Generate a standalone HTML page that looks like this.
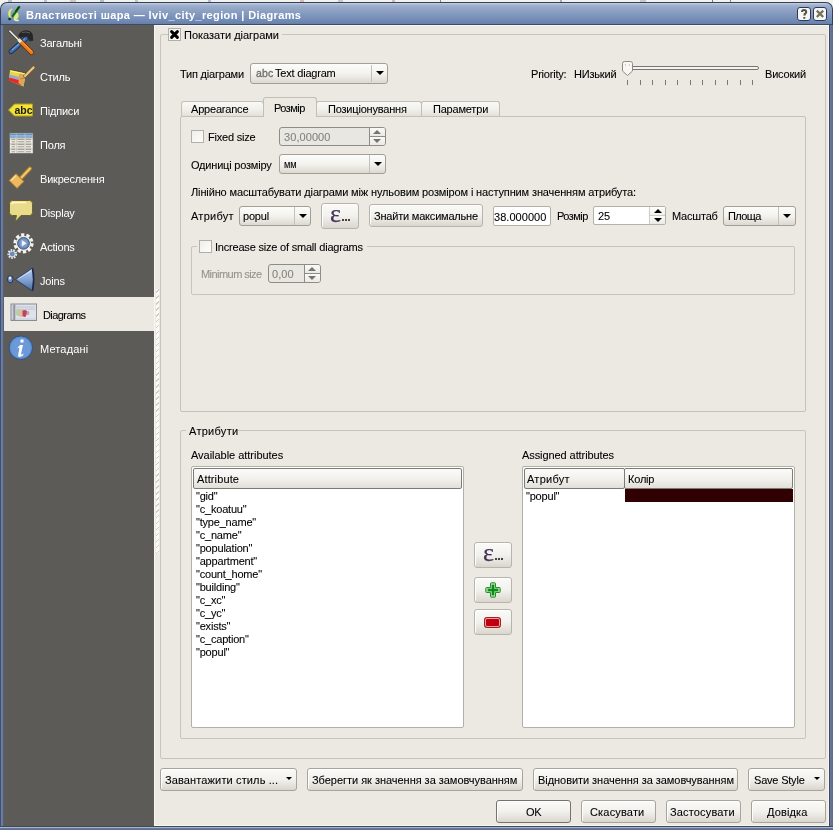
<!DOCTYPE html>
<html><head><meta charset="utf-8">
<style>
*{box-sizing:border-box}
html,body{margin:0;padding:0;width:833px;height:830px;overflow:hidden;background:#f1f1ee;font-family:"Liberation Sans",sans-serif;font-size:11px;color:#000}
#root{position:absolute;left:0;top:0;width:833px;height:830px;will-change:transform;overflow:hidden}
.a{position:absolute}
.t{position:absolute;white-space:nowrap;line-height:13px;letter-spacing:-0.2px;-webkit-text-stroke:0.08px currentColor}
#title{left:0;top:2px;width:833px;height:23px;border:1px solid #34405a;border-bottom:none;border-radius:7px 7px 0 0;background:linear-gradient(#c9d4e6 0,#b0bfd8 1px,#9cadca 3px,#8399be 11px,#6f89b3 18px,#6580ab 21px,#3d4a60 21px)}
#frameL{left:0;top:25px;width:4px;height:805px;background:linear-gradient(90deg,#3e5078 0,#3e5078 1px,#6a7fa0 1px,#6a7a98 2px,#6a7a98 3px,#5a6070 3px)}
#frameR{left:829px;top:25px;width:4px;height:805px;background:linear-gradient(90deg,#3e4a62 0,#3e4a62 1px,#6a7a98 1px,#5a6a88 4px)}
#frameB{left:0;top:826px;width:833px;height:4px;background:linear-gradient(#3f4a5e 0,#3f4a5e 1px,#a9b4cc 1px,#a9b4cc 2px,#6a7a98 2px,#5a6a88 4px)}
#side{left:4px;top:25px;width:150px;height:801px;background:#5c5b57}
#content{left:154px;top:25px;width:675px;height:801px;background:#ece9e3;border-left:1px solid #f7f6f2;border-top:1px solid #f7f6f2;border-right:1px solid #f7f6f2;border-bottom:1px solid #f7f6f2}
.bg{background:#ece9e3}
.gb{position:absolute;border:1px solid #c8c5bc;border-radius:2px}
.btn{position:absolute;border:1px solid #a7a49c;border-radius:3px;background:linear-gradient(#fafaf8,#f2f1ed 50%,#e4e1da 80%,#d9d6ce);box-shadow:inset 1px 1px 0 #fff}
.field{position:absolute;border:1px solid #a9a69e;border-radius:2px;background:#fff}
.cb{position:absolute;width:13px;height:13px;border:1px solid #b1afa7;background:linear-gradient(135deg,#efeee9,#fdfdfc)}
.combo{position:absolute;border:1px solid #a29f97;border-radius:3px;background:linear-gradient(#fcfcfa,#f3f2ee 50%,#e6e3dc 80%,#dcd9d1)}
.sep{position:absolute;top:0;bottom:0;width:1px;background:#c4c1b8}
.arr{position:absolute;width:0;height:0;border-left:4px solid transparent;border-right:4px solid transparent;border-top:4px solid #000}
.arru{position:absolute;width:0;height:0;border-left:4px solid transparent;border-right:4px solid transparent;border-bottom:4px solid #000}
.si{color:#fff;-webkit-text-stroke:0}
.tab{position:absolute;border:1px solid #c2bfb6;border-bottom:none;border-radius:3px 3px 0 0;background:linear-gradient(#f9f9f7,#efeee9 60%,#e3e0d8)}
.spin{position:absolute;border:1px solid #8f8c85;border-radius:3px;background:#fff;overflow:hidden}
.sbtn{position:absolute;right:0;width:16px;background:linear-gradient(#fafaf8,#ebe9e3);border-left:1px solid #8f8c85}
.hdr{position:absolute;border:1px solid #7d7b76;border-radius:2px;background:linear-gradient(#fbfbfa,#f1f0ec 55%,#e2dfd8)}
</style></head><body><div id="root">
<!-- window frame -->
<div class="a" style="left:8px;top:0;width:4px;height:2px;background:#b8c0c8"></div><div class="a" style="left:44px;top:0;width:3px;height:2px;background:#c0c4cc"></div><div class="a" style="left:70px;top:0;width:6px;height:2px;background:#d8c4c0"></div><div class="a" style="left:100px;top:0;width:4px;height:2px;background:#b8bcc0"></div><div class="a" style="left:135px;top:0;width:3px;height:2px;background:#c0c4c8"></div><div class="a" style="left:208px;top:0;width:3px;height:2px;background:#b8bcc8"></div><div class="a" style="left:300px;top:0;width:4px;height:2px;background:#d8b8b8"></div><div class="a" style="left:338px;top:0;width:5px;height:2px;background:#c8c8cc"></div><div class="a" style="left:392px;top:0;width:3px;height:2px;background:#d8b8b8"></div><div class="a" style="left:440px;top:0;width:1px;height:2px;background:#888"></div><div class="a" style="left:560px;top:0;width:2px;height:2px;background:#aaa"></div><div class="a" style="left:640px;top:0;width:6px;height:2px;background:#c8c8c8"></div><div class="a" style="left:712px;top:0;width:1px;height:2px;background:#777"></div><div class="a" style="left:730px;top:0;width:1px;height:2px;background:#888"></div>
<div id="title" class="a"></div>
<div class="t" style="left:26px;top:9px;color:#fff;font-weight:bold;font-size:11px;-webkit-text-stroke:0;letter-spacing:0.38px">Властивості шара — lviv_city_region | Diagrams</div>
<div id="frameL" class="a"></div>
<div id="frameR" class="a"></div>
<div id="frameB" class="a"></div>
<div id="side" class="a"></div>
<div id="content" class="a"></div>

<!-- sidebar -->
<div class="a" style="left:4px;top:297px;width:150px;height:34px;background:#ece9e3"></div>
<div class="t si" style="left:40px;top:37px">Загальні</div>
<div class="t si" style="left:40px;top:71px">Стиль</div>
<div class="t si" style="left:40px;top:105px">Підписи</div>
<div class="t si" style="left:40px;top:139px">Поля</div>
<div class="t si" style="left:40px;top:173px">Викреслення</div>
<div class="t si" style="left:40px;top:207px">Display</div>
<div class="t si" style="left:40px;top:241px">Actions</div>
<div class="t si" style="left:40px;top:275px">Joins</div>
<div class="t" style="left:43px;top:309px;letter-spacing:-0.58px">Diagrams</div>
<div class="t si" style="left:40px;top:343px;letter-spacing:0.14px">Метадані</div>
<div class="a" style="left:156px;top:289px;width:3px;height:265px;background:repeating-linear-gradient(135deg,#fafaf7 0,#fafaf7 2px,#cfccc4 2px,#cfccc4 3px,#fafaf7 3px,#fafaf7 4.2px)"></div>
<!-- title icons -->
<svg class="a" style="left:4px;top:4px" width="20" height="20" viewBox="0 0 20 20">
<path d="M7.5 4.5 Q4 6 4.2 10 Q4.5 13.5 7 14.5 Q6 11 6.5 8.5 Q7 6 8.5 5 Z" fill="#e4ec78" stroke="#c8d060" stroke-width="0.4"/>
<path d="M10 7.5 Q13.5 7 14.5 10.5 Q15 14 12.5 15.5 Q10.5 16 9.5 14 Z" fill="#d8f078"/>
<path d="M15.2 3 L8.8 12" stroke="#136a18" stroke-width="2.2" stroke-linecap="round"/>
<path d="M14.5 3.5 L12 7" stroke="#0a4a10" stroke-width="1.6" stroke-linecap="round"/>
<ellipse cx="5.6" cy="15" rx="1.5" ry="1.3" fill="#183818"/>
<path d="M10.5 15.5 Q12 16.8 14 16.4" stroke="#eef6c0" stroke-width="1.6" fill="none" stroke-linecap="round"/>
</svg>
<svg class="a" style="left:797px;top:7px" width="30" height="14" viewBox="0 0 30 14">
<rect x="0.5" y="0.5" width="13" height="13" rx="2.5" fill="#f6f6f8" stroke="#2c3a55"/>
<rect x="16.5" y="0.5" width="13" height="13" rx="2.5" fill="#f6f6f8" stroke="#2c3a55"/>
<path d="M5 5 Q5 3 7 3 Q9.2 3 9.2 4.9 Q9.2 6.2 7.7 7 L7.4 8.6" fill="none" stroke="#55533a" stroke-width="2"/>
<rect x="6.3" y="10" width="2" height="1.8" fill="#5a5838"/>
<path d="M19.8 3.6 L26.2 10 M26.2 3.6 L19.8 10" stroke="#74725c" stroke-width="2.3"/>
</svg>

<!-- sidebar icons -->
<svg class="a" style="left:6px;top:28px" width="32" height="32" viewBox="0 0 32 32">
<path d="M12.5 7.5 Q15 2.5 21 2.8 Q26 3.2 26.5 8 L26.8 12.5 L23.5 12.8 Q22.5 8.5 19.5 8.2 Q16.5 8 14.5 10 Z" fill="#25272b" stroke="#1a1b1e" stroke-width="0.6"/>
<path d="M16 4.5 Q20 3.2 24 5" stroke="#5a5e66" stroke-width="1" fill="none"/>
<path d="M20 10.5 L5 23.5" stroke="#1f3050" stroke-width="5" stroke-linecap="round"/>
<path d="M20 10.5 L5 23.5" stroke="#3f70b0" stroke-width="3.2" stroke-linecap="round"/>
<path d="M19 10.5 L6 22" stroke="#8ab0e0" stroke-width="1"/>
<path d="M3.8 3 L13 12.2" stroke="#3a3a36" stroke-width="2.6" stroke-linecap="round"/>
<path d="M3.8 3 L13 12.2" stroke="#f2f2ea" stroke-width="1.6" stroke-linecap="round"/>
<path d="M15 14 L25.5 24.5" stroke="#6a3008" stroke-width="5" stroke-linecap="round"/>
<path d="M15 14 L25.5 24.5" stroke="#f07a18" stroke-width="3.4" stroke-linecap="round"/>
<path d="M15.5 13 L26 23.5" stroke="#ffb060" stroke-width="0.9"/>
<path d="M12.5 11.5 L15 14" stroke="#f0ead0" stroke-width="3.2"/>
</svg>
<svg class="a" style="left:6px;top:62px" width="32" height="32" viewBox="0 0 32 32">
<path d="M4 7.5 L20 11 L17.5 24.5 L3 18.5 Z" fill="#e8d848"/>
<path d="M3.6 12.5 L14 15 L13 18 L3.2 15.5 Z" fill="#98a8d8"/>
<path d="M3.2 15.5 L13 18 L16 23.5 L3 18.8 Z" fill="#e82828"/>
<path d="M13 11.5 L20 11 L17.5 24.5 L12.5 21 Z" fill="#dca858"/>
<path d="M14 17 L19 16" stroke="#b88838" stroke-width="1"/>
<path d="M19 14 L27.5 5.5" stroke="#7a5a28" stroke-width="3.6" stroke-linecap="round"/>
<path d="M19 14 L27.5 5.5" stroke="#e8c888" stroke-width="2.2" stroke-linecap="round"/>
<path d="M4 7.5 L20 11" stroke="#3a3418" stroke-width="1" opacity=".7"/>
<path d="M5 9 L19 12" stroke="#fff080" stroke-width="1.2"/>
</svg>
<svg class="a" style="left:6px;top:96px" width="32" height="32" viewBox="0 0 32 32">
<path d="M2.5 14 L8.5 8 H26.5 V20 H8.5 Z" fill="#f2e23a" stroke="#b0a010" stroke-width="1"/>
<text x="8.5" y="17.5" font-family="Liberation Sans" font-weight="bold" font-size="10.5" fill="#1a1a10">abc</text>
</svg>
<svg class="a" style="left:6px;top:130px" width="32" height="32" viewBox="0 0 32 32">
<rect x="3.5" y="3" width="23.5" height="20.5" fill="#eeece6" stroke="#6a6c70" stroke-width="0.8"/>
<rect x="4" y="3.5" width="22.5" height="2" fill="#6890c0"/><rect x="4" y="5.5" width="22.5" height="2.5" fill="#88acd4"/>
<rect x="4" y="8" width="22.5" height="2.5" fill="#dcd6c4"/><path d="M5.5 9.3 H9 M11.5 9.3 H18 M20 9.3 H25" stroke="#8c8c8a" stroke-width="0.9"/><rect x="4" y="10.5" width="22.5" height="2.5" fill="#f2f0ea"/><path d="M5.5 11.8 H9 M11.5 11.8 H18 M20 11.8 H25" stroke="#8c8c8a" stroke-width="0.9"/><rect x="4" y="13" width="22.5" height="2.5" fill="#dcd6c4"/><path d="M5.5 14.3 H9 M11.5 14.3 H18 M20 14.3 H25" stroke="#8c8c8a" stroke-width="0.9"/><rect x="4" y="15.5" width="22.5" height="2.5" fill="#f2f0ea"/><path d="M5.5 16.8 H9 M11.5 16.8 H18 M20 16.8 H25" stroke="#8c8c8a" stroke-width="0.9"/><rect x="4" y="18" width="22.5" height="2.5" fill="#dcd6c4"/><path d="M5.5 19.3 H9 M11.5 19.3 H18 M20 19.3 H25" stroke="#8c8c8a" stroke-width="0.9"/><rect x="4" y="20.5" width="22.5" height="2.5" fill="#f2f0ea"/><path d="M5.5 21.8 H9 M11.5 21.8 H18 M20 21.8 H25" stroke="#8c8c8a" stroke-width="0.9"/>
<path d="M10.3 3.5 V23 M19 3.5 V23" stroke="#c4c0b0" stroke-width="0.8"/>
</svg>
<svg class="a" style="left:6px;top:164px" width="32" height="32" viewBox="0 0 32 32">
<path d="M15 14 L24 4.5" stroke="#b08020" stroke-width="4" stroke-linecap="round"/>
<path d="M15 14 L24 4.5" stroke="#f0c878" stroke-width="2" stroke-linecap="round"/>
<path d="M3 16.5 L10 9.5 L18 17.5 L11 24.5 Z" fill="#ecb860" stroke="#9a7020" stroke-width="1"/>
<path d="M5 16.5 L10 11.5" stroke="#ffe0a0" stroke-width="1.5"/>
</svg>
<svg class="a" style="left:6px;top:198px" width="32" height="32" viewBox="0 0 32 32">
<path d="M6.5 2.5 H23.5 Q26.5 2.5 26.5 5.5 V14.5 Q26.5 17.5 23.5 17.5 H15 L9 24 L10.5 17.5 H6.5 Q3.5 17.5 3.5 14.5 V5.5 Q3.5 2.5 6.5 2.5 Z" fill="#e8dc8c" stroke="#6e6020" stroke-width="1"/>
<path d="M6 6 Q6 4.5 8 4.5 H20" stroke="#fff8d0" stroke-width="1.5" fill="none"/>
</svg>
<svg class="a" style="left:6px;top:232px" width="32" height="32" viewBox="0 0 32 32">
<circle cx="17.5" cy="11.3" r="8.6" fill="none" stroke="#f4f4ec" stroke-width="3" stroke-dasharray="3.3 2.1"/>
<circle cx="17.5" cy="11.3" r="7.6" fill="#f2f2ea"/>
<circle cx="17.5" cy="11.3" r="5.9" fill="#6d89b6" stroke="#3d5078" stroke-width="0.9"/>
<circle cx="17.5" cy="11.3" r="4" fill="#7f9cc8"/>
<path d="M15.8 8 L20.6 11.3 L15.8 14.6 Z" fill="#eef4ff"/>
<circle cx="6.3" cy="22" r="3.9" fill="none" stroke="#e6eaee" stroke-width="2" stroke-dasharray="1.6 1.1"/>
<circle cx="6.3" cy="22" r="3.2" fill="#dfe4ea"/>
<circle cx="6.3" cy="22" r="2.4" fill="#6a8cb8"/>
</svg>
<svg class="a" style="left:6px;top:266px" width="32" height="32" viewBox="0 0 32 32">
<defs><linearGradient id="jg" x1="0" y1="0" x2="0" y2="1"><stop offset="0" stop-color="#b8d0f0"/><stop offset=".55" stop-color="#7ea0d0"/><stop offset="1" stop-color="#4a6898"/></linearGradient></defs>
<path d="M9.5 13.5 L26.5 2 Q28.5 13.5 26.5 25 Z" fill="url(#jg)" stroke="#2a3a60" stroke-width="0.9"/>
<path d="M26.5 2.5 Q28.8 13.5 26.5 24.5" stroke="#1c2848" stroke-width="1.6" fill="none"/>
<path d="M12 13 L25 5" stroke="#dce8fa" stroke-width="1" opacity=".8"/>
<ellipse cx="4.2" cy="13.2" rx="2.8" ry="3.6" fill="#7890c0" stroke="#24345a" stroke-width="1"/>
<ellipse cx="4" cy="12" rx="1.2" ry="1.5" fill="#e8f0ff"/>
<path d="M7 13.3 L9.5 13.5" stroke="#3a4a70" stroke-width="1"/>
</svg>
<svg class="a" style="left:6px;top:300px" width="32" height="32" viewBox="0 0 32 32">
<rect x="5" y="4" width="25.5" height="16.5" fill="#dfe2ea" stroke="#8a8c92" stroke-width="1"/>
<rect x="5.5" y="4.5" width="3" height="15.5" fill="#a4a7ae"/>
<path d="M6.5 5 V19.5" stroke="#d8dadf" stroke-width="0.8"/>
<path d="M8.8 4.5 V20" stroke="#6c6e74" stroke-width="0.8"/>
<path d="M10 7 H29 M10 9.2 H29" stroke="#b4bccb" stroke-width="0.8"/>
<ellipse cx="12.5" cy="12.5" rx="2.6" ry="3.6" fill="#b0d4a8"/>
<ellipse cx="15.5" cy="13.5" rx="2.6" ry="3.5" fill="#e8b898"/>
<path d="M16.5 10.5 Q19 9.5 21 11 Q21.5 14 19.5 16.8 Q17.5 17.5 16.5 15.5 Z" fill="#b84858"/>
<ellipse cx="22" cy="13" rx="1.4" ry="2" fill="#c898c0"/>
<path d="M9.5 19 H30" stroke="#c8ccd8" stroke-width="1"/>
</svg>
<svg class="a" style="left:6px;top:334px" width="32" height="32" viewBox="0 0 32 32">
<circle cx="14.8" cy="13.7" r="11.8" fill="#5a8ed0" stroke="#34507e" stroke-width="1"/>
<circle cx="14.8" cy="13.7" r="10" fill="#6c9ad8"/>
<rect x="14.5" y="5.5" width="3" height="3" fill="#fff"/>
<path d="M11 14.5 L14 11 H17 L15 20 Q14.8 21.5 17.5 19.5 L17 21.5 Q13 24 12 22 L13.5 13.5 Z" fill="#fff"/>
</svg>

<!-- main group -->
<div class="gb" style="left:160px;top:34px;width:666px;height:725px"></div>
<div class="a bg" style="left:168px;top:27px;width:114px;height:14px"></div>
<div class="cb" style="left:168px;top:28px"></div>
<svg class="a" style="left:168px;top:28px" width="13" height="13" viewBox="0 0 13 13"><path d="M3.6 3.6 L9.4 9.4 M9.4 3.6 L3.6 9.4" stroke="#000" stroke-width="3" stroke-linecap="round"/></svg>
<div class="t" style="left:184px;top:29px;letter-spacing:-0.01px">Показати діаграми</div>

<div class="t" style="left:180px;top:68px">Тип діаграми</div>
<div class="combo" style="left:250px;top:63px;width:138px;height:21px"><div class="sep" style="left:120px;top:1px;bottom:1px"></div><div class="arr" style="left:125px;top:7px"></div></div>
<div class="t" style="left:256px;top:67px;color:#74726d;font-size:10.5px;letter-spacing:0.1px;-webkit-text-stroke:0.35px #74726d">abc</div>
<div class="t" style="left:275px;top:67px">Text diagram</div>

<div class="t" style="left:531px;top:68px">Priority:</div>
<div class="t" style="left:574px;top:68px">НИзький</div>
<div class="t" style="left:765px;top:68px">Високий</div>

<!-- slider -->
<div class="a" style="left:622px;top:66px;width:137px;height:4px;border:1px solid #77756f;border-radius:2px;background:#f4f3ef"></div>
<svg class="a" style="left:621px;top:61px" width="13" height="16" viewBox="0 0 13 16"><path d="M1.5 2.5 Q1.5 0.5 3.5 0.5 H9.5 Q11.5 0.5 11.5 2.5 V10 L6.5 14.5 L1.5 10 Z" fill="#f7f6f2" stroke="#8d8a82"/><path d="M4 4 h1 M8 4 h1" stroke="#b0ada5"/></svg>
<div class="a" style="left:627px;top:80px;width:1px;height:5px;background:#7a7872"></div><div class="a" style="left:640px;top:80px;width:1px;height:5px;background:#7a7872"></div><div class="a" style="left:652px;top:80px;width:1px;height:5px;background:#7a7872"></div><div class="a" style="left:665px;top:80px;width:1px;height:5px;background:#7a7872"></div><div class="a" style="left:677px;top:80px;width:1px;height:5px;background:#7a7872"></div><div class="a" style="left:690px;top:80px;width:1px;height:5px;background:#7a7872"></div><div class="a" style="left:702px;top:80px;width:1px;height:5px;background:#7a7872"></div><div class="a" style="left:715px;top:80px;width:1px;height:5px;background:#7a7872"></div><div class="a" style="left:727px;top:80px;width:1px;height:5px;background:#7a7872"></div><div class="a" style="left:740px;top:80px;width:1px;height:5px;background:#7a7872"></div><div class="a" style="left:752px;top:80px;width:1px;height:5px;background:#7a7872"></div>

<!-- tabs -->
<div class="gb" style="left:180px;top:116px;width:626px;height:296px;border-color:#c4c1b8"></div>
<div class="tab" style="left:181px;top:101px;width:83px;height:15px"></div>
<div class="tab" style="left:316px;top:101px;width:106px;height:15px"></div>
<div class="tab" style="left:421px;top:101px;width:79px;height:15px"></div>
<div class="tab bg" style="left:263px;top:97px;width:54px;height:20px;border-color:#c2bfb6;background:#ece9e3"></div>
<div class="t" style="left:191px;top:103px">Appearance</div>
<div class="t" style="left:274px;top:102px;letter-spacing:-0.55px">Розмір</div>
<div class="t" style="left:328px;top:103px">Позиціонування</div>
<div class="t" style="left:433px;top:103px">Параметри</div>

<!-- size pane -->
<div class="cb" style="left:191px;top:130px"></div>
<div class="t" style="left:208px;top:131px">Fixed size</div>
<div class="spin" style="left:279px;top:127px;width:107px;height:19px;background:#e9e7e1;border-color:#8e8c86"><div class="sbtn" style="top:0;height:9px;border-color:#8e8c86;border-bottom:1px solid #8e8c86"></div><div class="sbtn" style="top:9px;height:8px;border-color:#8e8c86"></div>
<div class="arru" style="left:93px;top:2px;border-bottom-color:#76746e;border-left-width:4px;border-right-width:4px"></div><div class="arr" style="left:93px;top:11px;border-top-color:#76746e;border-left-width:4px;border-right-width:4px"></div></div>
<div class="t" style="left:284px;top:131px;color:#84827c;letter-spacing:0.08px">30,00000</div>

<div class="t" style="left:191px;top:159px">Одиниці розміру</div>
<div class="combo" style="left:279px;top:154px;width:107px;height:20px"><div class="sep" style="left:89px"></div><div class="arr" style="left:94px;top:7px"></div></div>
<div class="t" style="left:284px;top:158px;transform:scaleX(.84);transform-origin:0 0">мм</div>

<div class="t" style="left:191px;top:186px;letter-spacing:-0.13px">Лінійно масштабувати діаграми між нульовим розміром і наступним значенням атрибута:</div>

<div class="t" style="left:191px;top:210px;letter-spacing:0.25px">Атрибут</div>
<div class="combo" style="left:239px;top:206px;width:72px;height:20px"><div class="sep" style="left:54px"></div><div class="arr" style="left:59px;top:7px"></div></div>
<div class="t" style="left:243px;top:210px">popul</div>
<div class="btn" style="left:321px;top:203px;width:38px;height:26px;border-color:#b7b4ac"></div>
<div class="a" style="left:330px;top:204px;line-height:20px;font-family:'Liberation Serif',serif;font-size:26px;color:#45345a;-webkit-text-stroke:0.25px #45345a">ε</div><div class="a" style="left:342px;top:219px;width:2px;height:2px;background:#444"></div><div class="a" style="left:345px;top:219px;width:2px;height:2px;background:#444"></div><div class="a" style="left:348px;top:219px;width:2px;height:2px;background:#444"></div>
<div class="btn" style="left:369px;top:204px;width:114px;height:23px;border-color:#b7b4ac"></div>
<div class="t" style="left:374px;top:210px">Знайти максимальне</div>
<div class="field" style="left:493px;top:206px;width:58px;height:20px;border-color:#b4b1a9;overflow:hidden"><div class="t" style="left:0px;top:4px;letter-spacing:0.05px">38.000000</div></div>

<div class="t" style="left:557px;top:210px;letter-spacing:-0.55px">Розмір</div>
<div class="spin" style="left:593px;top:206px;width:73px;height:19px;border-color:#b4b1a9;border-radius:2px"><div class="sbtn" style="top:0;height:9px;border-left-color:#d0cdc5;border-bottom:1px solid #d0cdc5;background:linear-gradient(#fff,#f1f0ec)"></div><div class="sbtn" style="top:9px;height:8px;border-left-color:#d0cdc5;background:linear-gradient(#fbfbfa,#eceae5)"></div>
<div class="arru" style="left:60px;top:2px;border-left-width:4px;border-right-width:4px"></div><div class="arr" style="left:60px;top:11px;border-left-width:4px;border-right-width:4px"></div></div>
<div class="t" style="left:598px;top:210px">25</div>
<div class="t" style="left:672px;top:210px">Масштаб</div>
<div class="combo" style="left:723px;top:206px;width:73px;height:20px"><div class="sep" style="left:54px"></div><div class="arr" style="left:59px;top:7px"></div></div>
<div class="t" style="left:728px;top:210px;letter-spacing:-0.6px">Площа</div>

<div class="gb" style="left:191px;top:246px;width:604px;height:49px"></div>
<div class="a bg" style="left:197px;top:240px;width:170px;height:12px"></div>
<div class="cb" style="left:199px;top:240px"></div>
<div class="t" style="left:215px;top:241px">Increase size of small diagrams</div>
<div class="t" style="left:201px;top:268px;color:#94928c;letter-spacing:-0.55px">Minimum size</div>
<div class="spin" style="left:268px;top:264px;width:53px;height:19px;background:#e9e7e1;border-color:#8e8c86"><div class="sbtn" style="top:0;height:9px;border-color:#8e8c86;border-bottom:1px solid #8e8c86"></div><div class="sbtn" style="top:9px;height:8px;border-color:#8e8c86"></div>
<div class="arru" style="left:39px;top:2px;border-bottom-color:#76746e;border-left-width:4px;border-right-width:4px"></div><div class="arr" style="left:39px;top:11px;border-top-color:#76746e;border-left-width:4px;border-right-width:4px"></div></div>
<div class="t" style="left:272px;top:268px;color:#84827c;letter-spacing:0.08px">0,00</div>

<!-- attributes group -->
<div class="gb" style="left:180px;top:430px;width:626px;height:309px"></div>
<div class="a bg" style="left:186px;top:424px;width:52px;height:12px"></div>
<div class="t" style="left:189px;top:425px;letter-spacing:0.28px">Атрибути</div>
<div class="t" style="left:191px;top:449px;letter-spacing:-0.03px">Available attributes</div>
<div class="t" style="left:522px;top:449px;letter-spacing:-0.08px">Assigned attributes</div>

<div class="field" style="left:191px;top:466px;width:273px;height:262px;border-color:#b3b0a8"></div>
<div class="hdr" style="left:193px;top:468px;width:269px;height:21px"></div>
<div class="t" style="left:197px;top:473px;letter-spacing:0.12px">Attribute</div>
<div class="t" style="left:196px;top:490px;line-height:13px">"gid"<br>"c_koatuu"<br>"type_name"<br>"c_name"<br>"population"<br>"appartment"<br>"count_home"<br>"building"<br>"c_xc"<br>"c_yc"<br>"exists"<br>"c_caption"<br>"popul"</div>

<div class="field" style="left:522px;top:466px;width:273px;height:262px;border-color:#b3b0a8"></div>
<div class="hdr" style="left:524px;top:468px;width:101px;height:21px"></div>
<div class="hdr" style="left:624px;top:468px;width:169px;height:21px"></div>
<div class="t" style="left:527px;top:473px;letter-spacing:0.25px">Атрибут</div>
<div class="t" style="left:628px;top:473px">Колір</div>
<div class="t" style="left:526px;top:490px">"popul"</div>
<div class="a" style="left:625px;top:489px;width:168px;height:13px;background:#300002"></div>

<div class="btn" style="left:474px;top:542px;width:38px;height:26px;border-color:#b7b4ac"></div>
<div class="a" style="left:483px;top:543px;line-height:20px;font-family:'Liberation Serif',serif;font-size:26px;color:#45345a;-webkit-text-stroke:0.25px #45345a">ε</div><div class="a" style="left:495px;top:558px;width:2px;height:2px;background:#444"></div><div class="a" style="left:498px;top:558px;width:2px;height:2px;background:#444"></div><div class="a" style="left:501px;top:558px;width:2px;height:2px;background:#444"></div>
<div class="btn" style="left:474px;top:577px;width:38px;height:26px;border-color:#b7b4ac"></div>
<svg class="a" style="left:485px;top:582px" width="16" height="16" viewBox="0 0 16 16"><path d="M5.5 1.5 Q5.5 0.8 6.2 0.8 H9.8 Q10.5 0.8 10.5 1.5 V5.5 H14.5 Q15.2 5.5 15.2 6.2 V9.8 Q15.2 10.5 14.5 10.5 H10.5 V14.5 Q10.5 15.2 9.8 15.2 H6.2 Q5.5 15.2 5.5 14.5 V10.5 H1.5 Q0.8 10.5 0.8 9.8 V6.2 Q0.8 5.5 1.5 5.5 H5.5 Z" fill="#9ee09a" stroke="#2a8a30" stroke-width="1"/><path d="M6.8 2.8 H9.2 V6.8 H13.2 V9.2 H9.2 V13.2 H6.8 V9.2 H2.8 V6.8 H6.8 Z" fill="#0e8a1c"/></svg>
<div class="btn" style="left:474px;top:609px;width:38px;height:26px;border-color:#b7b4ac"></div>
<div class="a" style="left:485px;top:618px;width:15px;height:9px;border:1px solid #f0a0a0;border-radius:2px;background:#c00010;box-shadow:0 0 0 1px #a02020"></div>

<!-- bottom buttons -->
<div class="btn" style="left:160px;top:768px;width:137px;height:23px"></div>
<div class="t" style="left:165px;top:774px;letter-spacing:0.13px">Завантажити стиль ...</div>
<div class="arr" style="left:286px;top:777px;border-left-width:3px;border-right-width:3px;border-top-width:3px"></div>
<div class="btn" style="left:307px;top:768px;width:216px;height:23px"></div>
<div class="t" style="left:312px;top:774px;letter-spacing:-0.03px">Зберегти як значення за замовчуванням</div>
<div class="btn" style="left:533px;top:768px;width:205px;height:23px"></div>
<div class="t" style="left:538px;top:774px;letter-spacing:-0.05px">Відновити значення за замовчуванням</div>
<div class="btn" style="left:748px;top:768px;width:77px;height:23px"></div>
<div class="t" style="left:754px;top:774px">Save Style</div>
<div class="arr" style="left:814px;top:777px;border-left-width:3px;border-right-width:3px;border-top-width:3px"></div>

<div class="btn" style="left:496px;top:800px;width:75px;height:23px;border-color:#75736d"></div>
<div class="t" style="left:526px;top:806px">OK</div>
<div class="btn" style="left:581px;top:800px;width:75px;height:23px"></div>
<div class="t" style="left:590px;top:806px;letter-spacing:0.17px">Скасувати</div>
<div class="btn" style="left:666px;top:800px;width:75px;height:23px"></div>
<div class="t" style="left:670px;top:806px;letter-spacing:0.16px">Застосувати</div>
<div class="btn" style="left:751px;top:800px;width:75px;height:23px"></div>
<div class="t" style="left:767px;top:806px;letter-spacing:0.13px">Довідка</div>
</div></body></html>
